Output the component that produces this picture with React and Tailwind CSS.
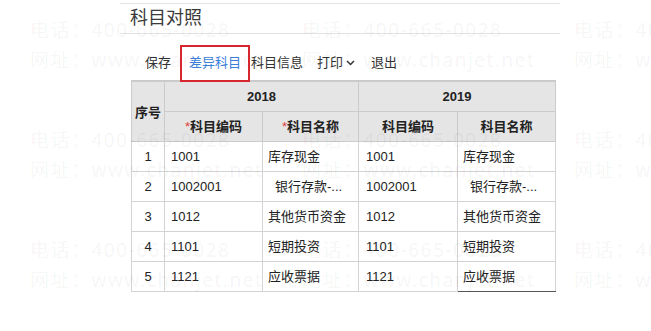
import { Fragment } from "react";

const rows = [
  { no: 1, code: "1001", name: "库存现金", code2: "1001", name2: "库存现金" },
  { no: 2, code: "1002001", name: "银行存款-...", code2: "1002001", name2: "银行存款-...", indent: true },
  { no: 3, code: "1012", name: "其他货币资金", code2: "1012", name2: "其他货币资金" },
  { no: 4, code: "1101", name: "短期投资", code2: "1101", name2: "短期投资" },
  { no: 5, code: "1121", name: "应收票据", code2: "1121", name2: "应收票据" },
];

const font = {
  fontFamily: '"Liberation Sans", "Noto Sans CJK SC", sans-serif',
};

function Watermark() {
  const cols = [30, 302, 574];
  const tops = [15, 125, 235];
  return (
    <div className="pointer-events-none absolute inset-0">
      {tops.map((t) =>
        cols.map((l) => (
          <div
            key={`${t}-${l}`}
            className="absolute whitespace-nowrap text-[19px] leading-[30px] tracking-[1.5px] text-black/[0.055]"
            style={{ top: t, left: l, fontFamily: '"Noto Sans", "Noto Sans CJK SC", sans-serif' }}
          >
            <div>电话：400-665-0028</div>
            <div>网址：www.chanjet.net</div>
          </div>
        ))
      )}
    </div>
  );
}

export default function App() {
  return (
    <div className="relative h-[331px] w-[651px] overflow-hidden bg-white text-[#333]" style={font}>
      <div className="ml-[120px] w-[440px] pt-[3px]">
        <div className="h-[31px] border-y border-[#e3e3e3] pl-[10px] pt-[3px] text-[18px] leading-[22px] text-[#3a3a3a]">
          科目对照
        </div>
        <div className="flex h-[46px] items-center pl-[25px] pt-[12px] text-[13px] text-[#333]">
          <span className="mr-[9px]">保存</span>
          <span className="relative z-10 flex h-[37px] w-[70px] shrink-0 items-center justify-center border-2 border-[#d8262e] text-[#3c7fd8]">
            差异科目
          </span>
          <span className="ml-[1px]">科目信息</span>
          <span className="ml-[14px] flex items-center">
            打印
            <svg width="9" height="6" viewBox="0 0 9 6" className="ml-[3px]">
              <path d="M1 1l3.5 3.5L8 1" fill="none" stroke="#333" strokeWidth="1.5" />
            </svg>
          </span>
          <span className="ml-[16px]">退出</span>
        </div>
        <div className="ml-[11px] w-[425px] border-t border-[#c9c9c9]">
          <table className="w-[424px] table-fixed border-collapse text-[13px]">
            <colgroup>
              <col className="w-[33px]" />
              <col className="w-[98px]" />
              <col className="w-[96px]" />
              <col className="w-[99px]" />
              <col className="w-[98px]" />
            </colgroup>
            <thead>
              <tr className="h-[30px] bg-[#e5e5e5] font-bold text-[#222]">
                <th rowSpan={2} className="border border-[#cbcbcb] p-0 pt-[3px]">序号</th>
                <th colSpan={2} className="border border-[#cbcbcb] p-0">2018</th>
                <th colSpan={2} className="border border-[#cbcbcb] p-0">2019</th>
              </tr>
              <tr className="h-[30px] bg-[#e5e5e5] font-bold text-[#222]">
                {["*科目编码", "*科目名称", "科目编码", "科目名称"].map((h, i) => (
                  <th key={i} className="border border-[#cbcbcb] p-0">
                    {h.startsWith("*") ? (
                      <Fragment>
                        <span className="font-normal text-[#e0403a]">*</span>
                        {h.slice(1)}
                      </Fragment>
                    ) : (
                      h
                    )}
                  </th>
                ))}
              </tr>
            </thead>
            <tbody>
              {rows.map((r, idx) => (
                <tr key={r.no} className="h-[30px] text-[#222]">
                  <td className="border border-[#d3d3d3] p-0 text-center">{r.no}</td>
                  <td className="border border-[#d3d3d3] px-[6px] py-0">{r.code}</td>
                  <td
                    className={
                      r.indent
                        ? "whitespace-nowrap border border-[#d3d3d3] py-0 pl-[12px] pr-[5px]"
                        : "whitespace-nowrap border border-[#d3d3d3] px-[5px] py-0"
                    }
                  >
                    {r.name}
                  </td>
                  <td className="border border-[#d3d3d3] px-[7px] py-0">{r.code2}</td>
                  <td
                    className={
                      idx === rows.length - 1
                        ? "whitespace-nowrap border border-[#d3d3d3] border-b-[#555] px-[5px] py-0"
                        : r.indent
                          ? "whitespace-nowrap border border-[#d3d3d3] py-0 pl-[12px] pr-[5px]"
                          : "whitespace-nowrap border border-[#d3d3d3] px-[5px] py-0"
                    }
                  >
                    {r.name2}
                  </td>
                </tr>
              ))}
            </tbody>
          </table>
        </div>
      </div>
      <Watermark />
    </div>
  );
}
